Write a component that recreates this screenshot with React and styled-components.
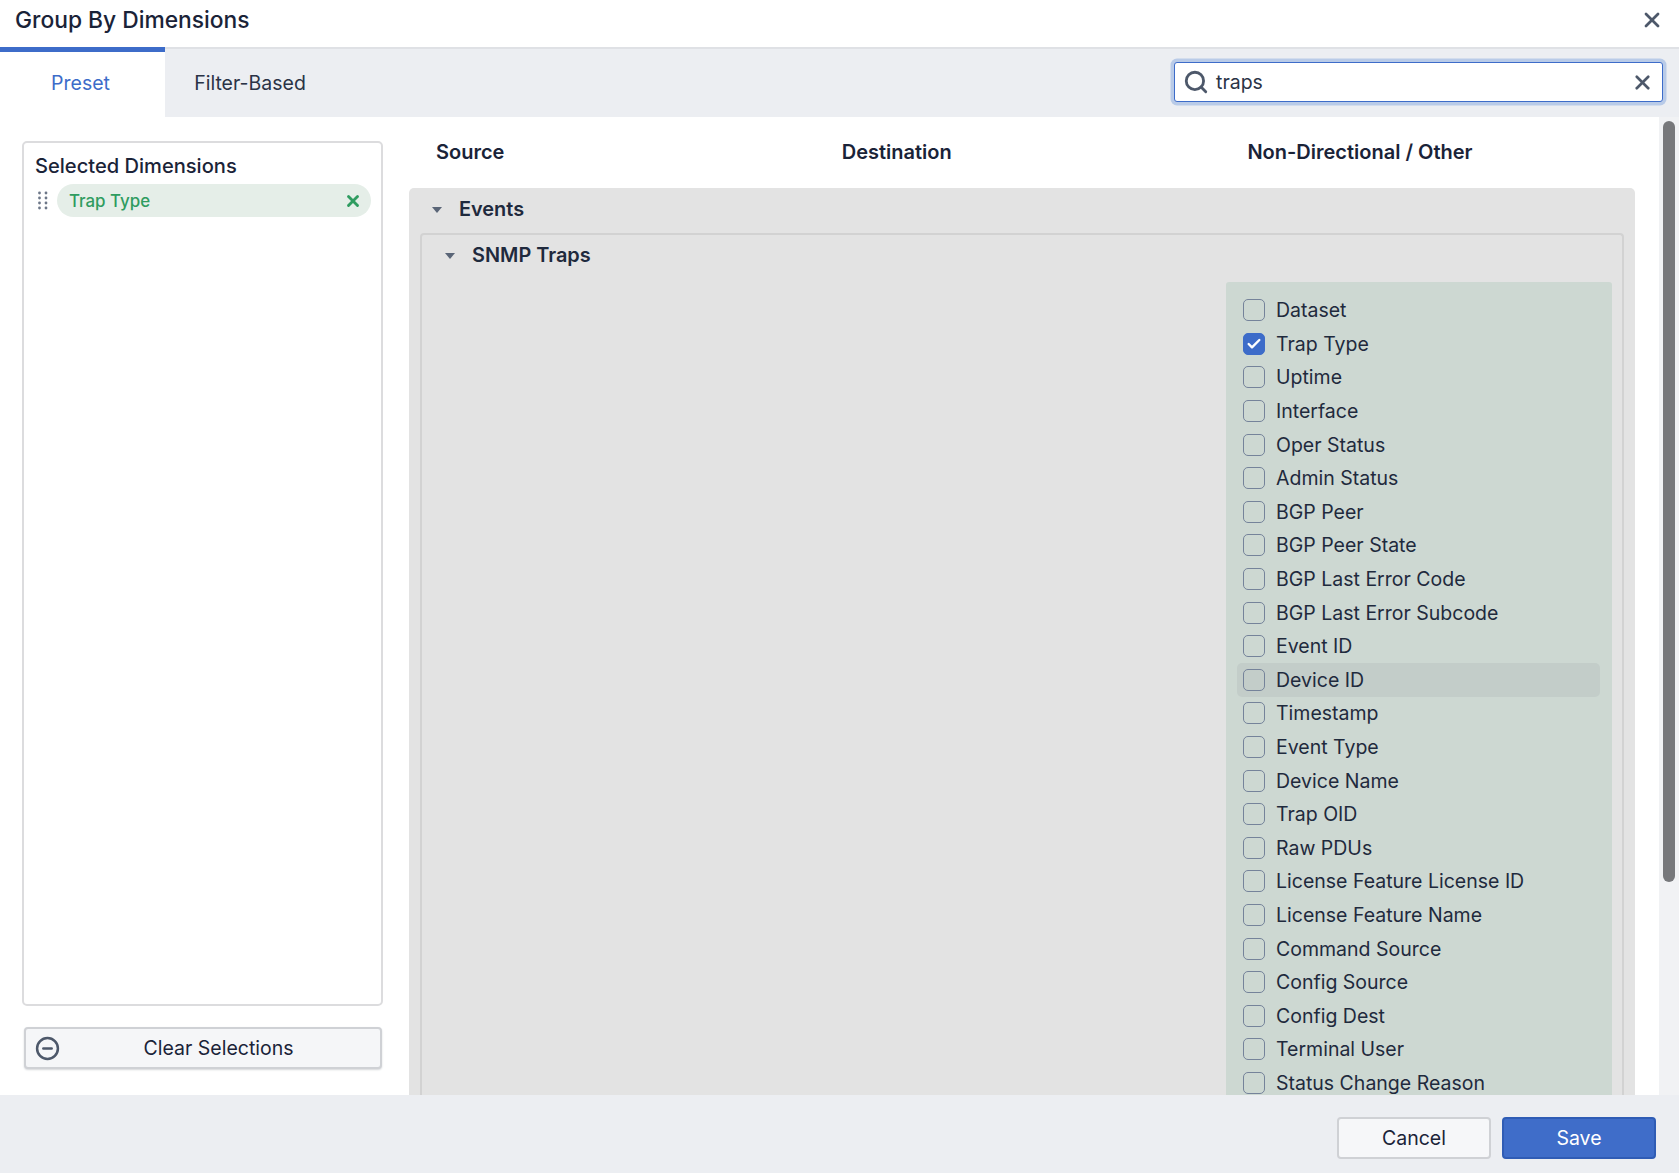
import React from 'react';
import styled, { createGlobalStyle } from 'styled-components';
import { Check, CircleMinus, Search, X } from 'lucide-react';

const GlobalStyle = createGlobalStyle`
    html, body {
        margin: 0;
        padding: 0;
        background: #fff;
    }
    body {
        font-family: Inter, "Liberation Sans", sans-serif;
        color: #1a2338;
    }
    * {
        box-sizing: border-box;
    }
`;

const Dialog = styled.div`
    height: 100vh;
    display: flex;
    flex-direction: column;
    overflow: hidden;
`;

const Header = styled.header`
    height: 47px;
    flex: none;
    display: flex;
    align-items: center;
    justify-content: space-between;
    padding: 0 15px 8px 15px;
`;

const Title = styled.h1`
    margin: 0;
    font-size: 22.8px;
    font-weight: 500;
    color: #1a2338;
`;

const IconButton = styled.span`
    display: flex;
    color: #4d586a;
`;

const TabBar = styled.div`
    height: 70px;
    flex: none;
    display: flex;
    justify-content: space-between;
    background: #eceef2;
    border-top: 2px solid #dfe1e5;
    padding-right: 16px;
`;

const Tabs = styled.div`
    display: flex;
    margin-top: -2px;
`;

const Tab = styled.div`
    width: ${(p) => (p.$active ? '165px' : '170px')};
    display: flex;
    align-items: center;
    justify-content: center;
    font-size: 19.5px;
    padding-bottom: 4px;
    padding-right: ${(p) => (p.$active ? '4px' : '0')};
    color: ${(p) => (p.$active ? '#3d6cc9' : '#2a3346')};
    background: ${(p) => (p.$active ? '#fff' : 'transparent')};
    border-top: 5px solid ${(p) => (p.$active ? '#3d6cc9' : 'transparent')};
`;

const SearchBox = styled.div`
    width: 489px;
    height: 40px;
    margin-top: 13px;
    display: flex;
    align-items: center;
    gap: 7px;
    padding: 0 8px;
    background: #fff;
    border: 1.5px solid #3d6cc9;
    border-radius: 3px;
    box-shadow: 0 0 0 3.5px #b9cbe8;
    color: #4d586a;
`;

const SearchText = styled.span`
    flex: 1;
    font-size: 19.5px;
    color: #2a3346;
`;

const Body = styled.div`
    flex: 1;
    min-height: 0;
    display: flex;
    overflow: hidden;
`;

const Sidebar = styled.aside`
    width: 409px;
    flex: none;
    display: flex;
    flex-direction: column;
    padding: 24px 26px 26px 22px;
    gap: 21px;
`;

const SelectedPanel = styled.div`
    flex: 1;
    padding: 11px 10px 11px 11px;
    border: 2px solid #dcdcde;
    border-radius: 5px;
`;

const SelectedTitle = styled.div`
    font-size: 20.1px;
    font-weight: 500;
    line-height: 24px;
    margin-bottom: 6px;
`;

const SelectedRow = styled.div`
    display: flex;
    align-items: center;
    gap: 8px;
    padding-left: 2px;
`;

const Chip = styled.div`
    flex: 1;
    height: 33px;
    display: flex;
    align-items: center;
    justify-content: space-between;
    padding: 0 9px 0 12px;
    border-radius: 17px;
    background: #e5eee8;
    color: #2f9c60;
    font-size: 16.9px;
    font-weight: 500;
`;

const ClearButton = styled.div`
    height: 42px;
    margin: 0 1px 0 2px;
    flex: none;
    display: flex;
    align-items: center;
    padding: 0 9px;
    background: #f5f6f8;
    border: 2px solid #cfd1d5;
    border-radius: 4px;
    box-shadow: 0 1px 2px #d5d7da;
    color: #4d586a;
`;

const ClearLabel = styled.span`
    flex: 1;
    text-align: center;
    padding-left: 6px;
    font-size: 19.5px;
    color: #1a2338;
`;

const Main = styled.main`
    flex: 1;
    min-width: 0;
    overflow: hidden;
`;

const ColumnHeads = styled.div`
    display: grid;
    grid-template-columns: repeat(3, 405.7px);
    height: 71px;
    padding: 23px 0 0 27px;
    font-size: 20px;
    font-weight: 600;
    line-height: 24px;
`;

const EventsPanel = styled.section`
    background: #e3e3e3;
    border-radius: 5px 5px 0 0;
    padding: 0 11px;
`;

const SectionTitle = styled.div`
    display: flex;
    align-items: center;
    gap: 17px;
    height: ${(p) => p.$height}px;
    padding: 0 0 ${(p) => p.$lift}px ${(p) => p.$indent}px;
    font-size: 19.9px;
    font-weight: 600;
    color: #1f2a3d;
`;

const Caret = styled.span`
    width: 0;
    height: 0;
    margin-top: 3px;
    border-left: 5px solid transparent;
    border-right: 5px solid transparent;
    border-top: 6px solid #5a6577;
`;

const TrapsPanel = styled.div`
    border: 2px solid #d2d2d2;
    border-bottom: none;
    border-radius: 4px 4px 0 0;
    padding: 0 10px 0 0;
`;

const FieldGrid = styled.div`
    display: flex;
    justify-content: flex-end;
`;

const FieldColumn = styled.div`
    width: 386px;
    padding: 11.5px 12px 0 11px;
    background: #cdd8d2;
    border-radius: 3px 3px 0 0;
`;

const FieldRow = styled.label`
    height: 33.6px;
    display: flex;
    align-items: center;
    gap: 11px;
    padding-left: 6px;
    font-size: 19.5px;
    color: #1f2a3d;
    border-radius: 5px;
    background: ${(p) => (p.$hover ? '#c3cdc9' : 'transparent')};
`;

const Box = styled.span`
    width: 22px;
    height: 22px;
    flex: none;
    display: flex;
    align-items: center;
    justify-content: center;
    border-radius: 5px;
    border: 1.5px solid ${(p) => (p.$checked ? '#3d6cc9' : '#75839a')};
    background: ${(p) => (p.$checked ? '#3d6cc9' : 'transparent')};
    color: #fff;
`;

const Track = styled.div`
    width: 20px;
    flex: none;
    padding: 4px 4px 0;
    background: #f1f2f4;
    margin-left: 24px;
`;

const Thumb = styled.div`
    height: 761px;
    border-radius: 6px;
    background: #77787b;
`;

const Footer = styled.footer`
    height: 78px;
    flex: none;
    display: flex;
    justify-content: flex-end;
    align-items: flex-start;
    gap: 11px;
    padding: 22px 23px 0 0;
    background: #eceef2;
`;

const FooterButton = styled.div`
    width: 154px;
    height: 42px;
    display: flex;
    align-items: center;
    justify-content: center;
    border-radius: 4px;
    font-size: 19.5px;
    background: ${(p) => (p.$primary ? '#3f6dc9' : '#f6f7f9')};
    color: ${(p) => (p.$primary ? '#fff' : '#1a2338')};
    border: 2px solid ${(p) => (p.$primary ? '#2f5cb5' : '#cfd1d5')};
`;

const Grip = () => (
    <svg width="12" height="20" viewBox="0 0 12 20" fill="#6d7788">
        {[2, 7, 12, 17].map((y) => (
            <React.Fragment key={y}>
                <circle cx="2.5" cy={y} r="1.4" />
                <circle cx="9" cy={y} r="1.4" />
            </React.Fragment>
        ))}
    </svg>
);

const fields = [
    'Dataset', 'Trap Type', 'Uptime', 'Interface', 'Oper Status', 'Admin Status',
    'BGP Peer', 'BGP Peer State', 'BGP Last Error Code', 'BGP Last Error Subcode',
    'Event ID', 'Device ID', 'Timestamp', 'Event Type', 'Device Name', 'Trap OID',
    'Raw PDUs', 'License Feature License ID', 'License Feature Name', 'Command Source',
    'Config Source', 'Config Dest', 'Terminal User', 'Status Change Reason',
];

const App = () => {
    return (
        <Dialog>
            <GlobalStyle />
            <Header>
                <Title>Group By Dimensions</Title>
                <IconButton><X size={24} strokeWidth={2.8} /></IconButton>
            </Header>
            <TabBar>
                <Tabs>
                    <Tab $active>Preset</Tab>
                    <Tab>Filter-Based</Tab>
                </Tabs>
                <SearchBox>
                    <Search size={26} strokeWidth={2.6} />
                    <SearchText>traps</SearchText>
                    <X size={23} strokeWidth={2.8} />
                </SearchBox>
            </TabBar>
            <Body>
                <Sidebar>
                    <SelectedPanel>
                        <SelectedTitle>Selected Dimensions</SelectedTitle>
                        <SelectedRow>
                            <Grip />
                            <Chip>
                                Trap Type
                                <X size={18} strokeWidth={3.8} />
                            </Chip>
                        </SelectedRow>
                    </SelectedPanel>
                    <ClearButton>
                        <CircleMinus size={25} strokeWidth={2.4} />
                        <ClearLabel>Clear Selections</ClearLabel>
                    </ClearButton>
                </Sidebar>
                <Main>
                    <ColumnHeads>
                        <span>Source</span>
                        <span>Destination</span>
                        <span>Non-Directional / Other</span>
                    </ColumnHeads>
                    <EventsPanel>
                        <SectionTitle $height={45} $lift={4} $indent={12}><Caret />Events</SectionTitle>
                        <TrapsPanel>
                            <SectionTitle $height={47} $lift={8} $indent={23}><Caret />SNMP Traps</SectionTitle>
                            <FieldGrid>
                                <FieldColumn>
                                    {fields.map((field) => (
                                        <FieldRow key={field} $hover={field === 'Device ID'}>
                                            <Box $checked={field === 'Trap Type'}>
                                                {field === 'Trap Type' && <Check size={16} strokeWidth={3.6} />}
                                            </Box>
                                            {field}
                                        </FieldRow>
                                    ))}
                                </FieldColumn>
                            </FieldGrid>
                        </TrapsPanel>
                    </EventsPanel>
                </Main>
                <Track><Thumb /></Track>
            </Body>
            <Footer>
                <FooterButton>Cancel</FooterButton>
                <FooterButton $primary>Save</FooterButton>
            </Footer>
        </Dialog>
    );
};

export default App;
